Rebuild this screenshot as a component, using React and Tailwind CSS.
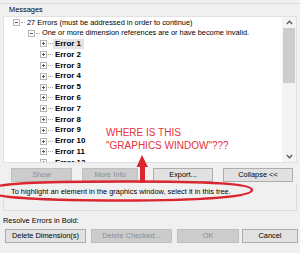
import React from 'react';

const Expander = ({ open }) => (
  <span className="relative flex items-center justify-center w-[7px] h-[7px] shrink-0 border border-[#b4b4b4] bg-white">
    <span className="absolute w-[3px] h-px bg-[#5a5a5a]" />
    {!open && <span className="absolute w-px h-[3px] bg-[#5a5a5a]" />}
  </span>
);

const Dots = ({ w }) => (
  <span className={`ml-px border-t border-dotted border-[#a8a8a8] ${w}`} />
);

const Chevron = ({ down }) => (
  <svg width="7" height="5" viewBox="0 0 7 5">
    <polyline
      points={down ? '0.8,1 3.5,3.8 6.2,1' : '0.8,4 3.5,1.2 6.2,4'}
      fill="none"
      stroke="#5a5a5a"
      strokeWidth="1.3"
    />
  </svg>
);

const Btn = ({ children, className, disabled, focused }) => (
  <div
    className={[
      'h-[14px] flex items-center justify-center border',
      disabled ? 'bg-[#cccccc] border-[#bfbfbf] text-[#8c8c8c]' : 'bg-[#e1e1e1] border-[#adadad] text-black',
      focused ? 'border-[#0078d7]' : '',
      className,
    ].join(' ')}
  >
    {children}
  </div>
);

const errors = Array.from({ length: 12 }, (_, i) => `Error ${i + 1}`);

export default function App() {
  return (
    <div className="relative w-[300px] h-[253px] overflow-hidden bg-[#f0f0f0] text-[7.4px] leading-none text-black font-['Liberation_Sans',Arial,sans-serif]">
      <div className="h-[3px]" />
      <div className="border-t border-[#dcdcdc]">
        <div className="h-[12px] pl-[9px] flex items-center">Messages</div>

        {/* tree */}
        <div className="mx-[3px] h-[147px] bg-white border border-[#e2e2e2] flex overflow-hidden">
          <div className="flex-1 overflow-hidden">
            <div className="h-[10.8px] flex items-center pl-[9px]">
              <Expander open />
              <Dots w="w-[4px]" />
              <span className="ml-[2px] whitespace-nowrap">27 Errors (must be addressed in order to continue)</span>
            </div>
            <div className="h-[10.8px] flex items-center pl-[24px]">
              <Expander open />
              <Dots w="w-[4px]" />
              <span className="ml-[2px] whitespace-nowrap">One or more dimension references are or have become invalid.</span>
            </div>
            {errors.map((e, i) => (
              <div key={e} className="h-[10.8px] flex items-center pl-[36px]">
                <Expander />
                <Dots w="w-[5px]" />
                <span
                  className={`h-[10px] flex items-center pl-[2px] pr-[3px] font-bold text-[7.9px] whitespace-nowrap ${
                    i === 0 ? 'bg-[#e3e3e3]' : ''
                  }`}
                >
                  {e}
                </span>
              </div>
            ))}
          </div>
          <div className="w-[14px] bg-[#f4f4f4] flex flex-col">
            <div className="h-[11px] flex items-center justify-center">
              <Chevron />
            </div>
            <div className="mx-px h-[55px] bg-[#cdcdcd]" />
            <div className="flex-1" />
            <div className="h-[11px] flex items-center justify-center">
              <Chevron down />
            </div>
          </div>
        </div>
      </div>

      {/* tree buttons */}
      <div className="mt-[5px] flex">
        <Btn disabled className="ml-[11px] w-[61px]">Show</Btn>
        <Btn disabled className="ml-[10px] w-[56px]">More Info</Btn>
        <Btn className="ml-[15px] w-[60px]">Export...</Btn>
        <Btn className="ml-[10px] w-[70px]">Collapse &lt;&lt;</Btn>
      </div>

      {/* status */}
      <div className="mt-px mx-[3px] h-[28px] border-l border-r border-b border-[#dcdcdc] pl-[7px] pt-[5px]">
        <span className="whitespace-nowrap">To highlight an element in the graphics window, select it in this tree.</span>
      </div>

      <div className="mt-[5px] h-[10px] pl-[3px] flex items-center">Resolve Errors in Bold:</div>

      <div className="mt-[3px] flex">
        <Btn className="ml-[5px] w-[81px]">Delete Dimension(s)</Btn>
        <Btn disabled className="ml-[5px] w-[81px]">Delete Checked...</Btn>
        <Btn disabled className="ml-[5px] w-[62px]">OK</Btn>
        <Btn focused className="ml-[3px] w-[56px]">Cancel</Btn>
      </div>

      {/* annotation */}
      <div className="absolute left-[106px] top-[126px] text-[10px] leading-[13px] text-[#e5323c] whitespace-nowrap">
        <div>WHERE IS THIS</div>
        <div>"GRAPHICS WINDOW"???</div>
      </div>
      <svg className="absolute left-0 top-0" width="300" height="253" viewBox="0 0 300 253">
        <polygon points="142,155 136.5,167 140,167 140,183 145,183 145,167 148,167" fill="#d9262f" />
        <path
          d="M -12 190 C -8 182, 60 181.5, 130 181.5 C 200 181.5, 252 183, 252 190 C 252 197, 200 200.5, 120 200.5 C 50 200.5, -8 198, -10 192"
          fill="none"
          stroke="#d9262f"
          strokeWidth="2.4"
        />
      </svg>
    </div>
  );
}
